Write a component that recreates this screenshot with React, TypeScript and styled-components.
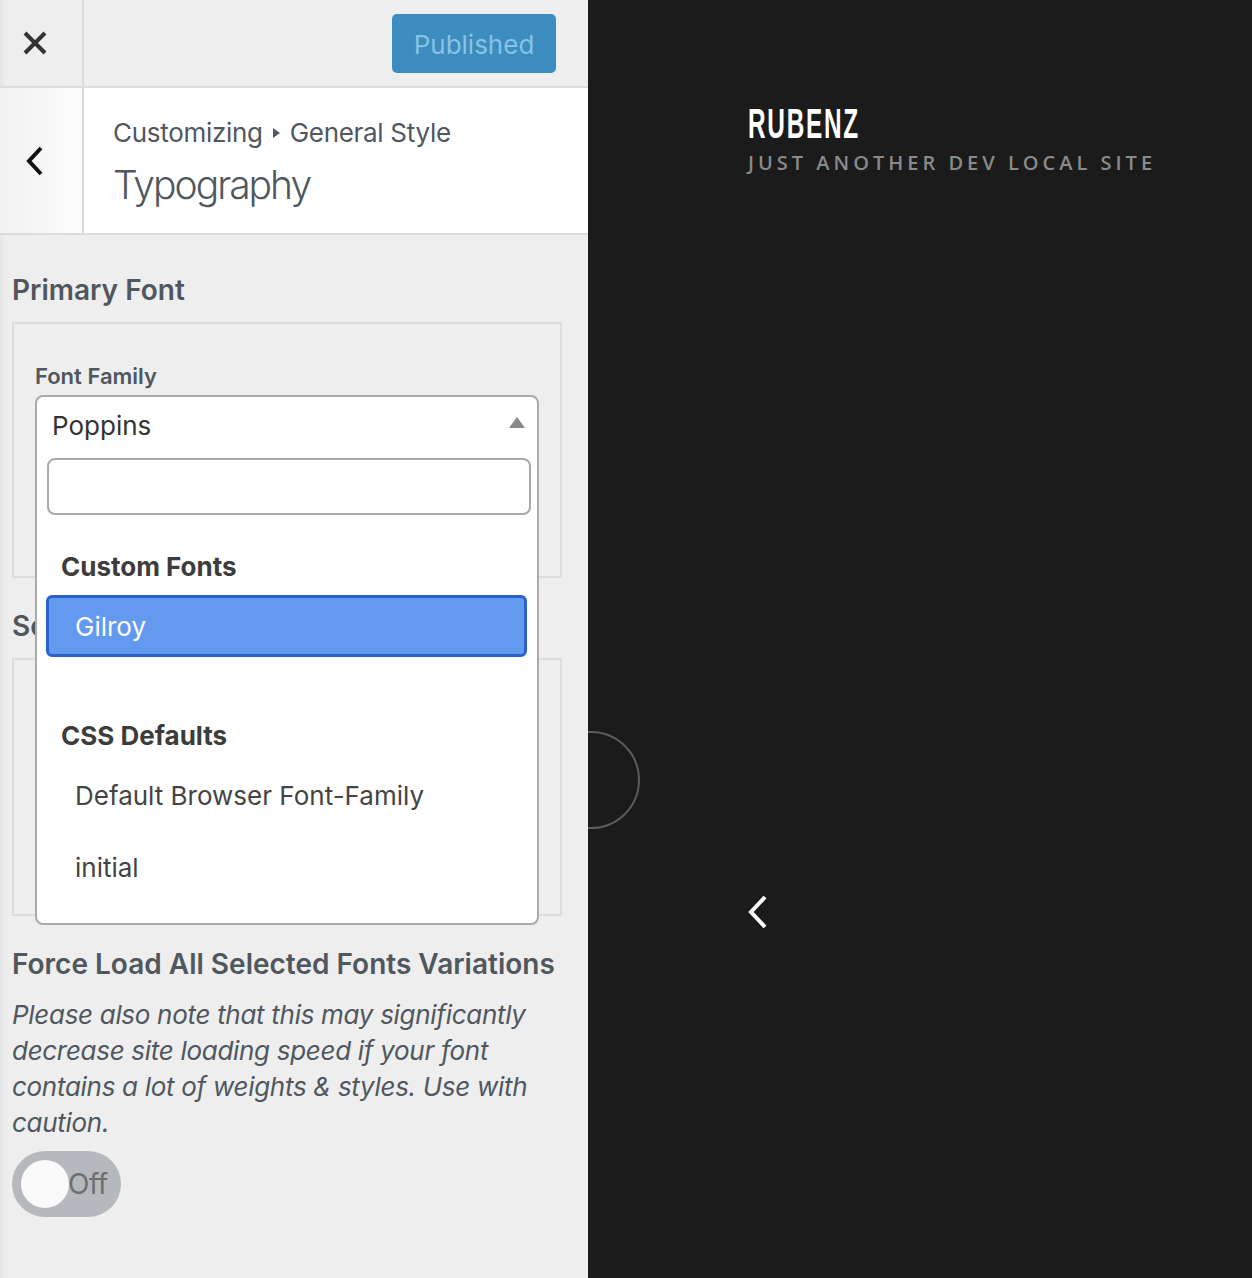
import React from "react";
import styled, { createGlobalStyle } from "styled-components";

const Global = createGlobalStyle`
  html, body { margin: 0; padding: 0; }
  body { overflow: hidden; font-family: Inter, "Noto Sans", sans-serif; }
  * { box-sizing: border-box; }
`;

const Page = styled.div`
  display: flex;
  width: 1252px;
  height: 1278px;
`;

const Sidebar = styled.aside`
  width: 588px;
  flex: none;
  background: #eeeeee;
  display: flex;
  flex-direction: column;
  position: relative;
  box-shadow: inset 10px 0 10px -10px rgba(0, 0, 0, 0.08);
`;

const TopBar = styled.div`
  display: flex;
  height: 88px;
  border-bottom: 2px solid #dcdcdc;
`;

const IconCell = styled.div<{ $light?: boolean }>`
  width: 84px;
  flex: none;
  border-right: 2px solid #dcdcdc;
  display: flex;
  align-items: center;
  justify-content: center;
  padding-right: 12px;
  background: ${(p) => (p.$light ? "linear-gradient(to right, #f1f1f1, #fdfdfd)" : "transparent")};
`;

const Actions = styled.div`
  flex: 1;
  display: flex;
  align-items: center;
  justify-content: flex-end;
  padding: 0 32px 0 0;
`;

const PublishButton = styled.button`
  width: 164px;
  height: 59px;
  border: none;
  border-radius: 5px;
  background: #3c8cc0;
  color: #86c3e6;
  font-family: Inter, sans-serif;
  font-size: 26px;
  font-weight: 400;
  padding: 3px 0 0;
  cursor: default;
`;

const TitleBar = styled.div`
  display: flex;
  height: 147px;
  border-bottom: 2px solid #dcdcdc;
`;

const TitleBox = styled.div`
  flex: 1;
  background: #ffffff;
  display: flex;
  flex-direction: column;
  padding: 28px 0 0 29px;
  color: #50575e;
`;

const Crumb = styled.div`
  font-size: 26px;
  line-height: 34px;
  letter-spacing: -0.3px;
  display: flex;
  align-items: center;
  gap: 10px;
`;

const CrumbArrow = styled.span`
  width: 0;
  height: 0;
  border-top: 5px solid transparent;
  border-bottom: 5px solid transparent;
  border-left: 7px solid #50575e;
`;

const PanelTitle = styled.div`
  font-size: 39px;
  font-weight: 300;
  line-height: 52px;
  margin-top: 9px;
  letter-spacing: -2px;
`;

const Content = styled.div`
  padding: 0 26px 0 12px;
  color: #50575e;
`;

const Section = styled.section`
  margin-top: 30px;
  &:first-child { margin-top: 37px; }
`;

const Heading = styled.h3`
  margin: 0 0 14px;
  font-size: 28px;
  line-height: 36px;
  font-weight: 600;
  color: #50575e;
`;

const Box = styled.div<{ $h: number }>`
  position: relative;
  height: ${(p) => p.$h}px;
  border: 2px solid #dddddd;
  padding: 37px 21px 0;
`;

const Label = styled.div`
  font-size: 22px;
  line-height: 30px;
  font-weight: 600;
  margin-bottom: 4px;
`;

const SelectWrap = styled.div`
  position: relative;
  z-index: 5;
`;

const SelectBox = styled.div`
  height: 55px;
  border: 2px solid #aaaaaa;
  border-radius: 8px 8px 0 0;
  background: #fff;
  display: flex;
  align-items: center;
  justify-content: space-between;
  padding: 5px 12px 0 15px;
  font-size: 26px;
  color: #333;
`;

const Caret = styled.span`
  width: 0;
  height: 0;
  margin-top: -5px;
  border-left: 8px solid transparent;
  border-right: 8px solid transparent;
  border-bottom: 11px solid #888;
`;

const Dropdown = styled.div`
  position: absolute;
  top: 100%;
  left: 0;
  right: 0;
  margin-top: -2px;
  height: 477px;
  background: #fff;
  border: 2px solid #aaaaaa;
  border-top: none;
  border-radius: 0 0 8px 8px;
  padding: 10px 10px 0 9px;
`;

const Search = styled.div`
  height: 57px;
  border: 2px solid #aaaaaa;
  border-radius: 8px;
  margin-left: 1px;
  margin-right: -4px;
`;

const GroupLabel = styled.div<{ $top: number }>`
  margin-top: ${(p) => p.$top}px;
  margin-bottom: 10px;
  padding-left: 15px;
  font-size: 26px;
  line-height: 36px;
  font-weight: 700;
  color: #3c3c3c;
`;

const Option = styled.div<{ $active?: boolean }>`
  height: 62px;
  margin-bottom: 10px;
  border: 3px solid ${(p) => (p.$active ? "#2a62c9" : "transparent")};
  border-radius: 6px;
  background: ${(p) => (p.$active ? "#6499f0" : "transparent")};
  color: ${(p) => (p.$active ? "#ffffff" : "#444444")};
  display: flex;
  align-items: center;
  padding: 0 0 0 26px;
  font-size: 26px;
`;

const Note = styled.p`
  margin: 15px 0 10px;
  font-size: 26px;
  line-height: 36px;
  font-style: italic;
  letter-spacing: -0.3px;
  color: #50575e;
`;

const Toggle = styled.div`
  position: relative;
  width: 109px;
  height: 66px;
  border-radius: 33px;
  background: #b5b8bc;
  display: flex;
  align-items: center;
  padding: 0 0 0 56px;
  font-size: 28px;
  letter-spacing: -0.5px;
  color: #6d6f72;
`;

const Knob = styled.span`
  position: absolute;
  left: 9px;
  top: 9px;
  width: 48px;
  height: 48px;
  border-radius: 50%;
  background: #fafafa;
`;

const Preview = styled.main`
  flex: 1;
  position: relative;
  overflow: hidden;
  background: #1b1b1b;
  padding: 104px 0 0 160px;
`;

const SiteTitle = styled.div`
  display: inline-block;
  font-family: "Liberation Sans", Arial, sans-serif;
  font-weight: 700;
  font-size: 42px;
  line-height: 40px;
  letter-spacing: 3px;
  color: #ffffff;
  transform: scaleX(0.58);
  transform-origin: left center;
`;

const Tagline = styled.div`
  margin-top: 6px;
  font-family: "Open Sans", sans-serif;
  font-weight: 600;
  font-size: 20px;
  line-height: 26px;
  letter-spacing: 4px;
  color: #8a8a8a;
`;

const Ring = styled.div`
  position: absolute;
  left: -46px;
  top: 731px;
  width: 98px;
  height: 98px;
  border: 2px solid #5c5c5c;
  border-radius: 50%;
`;

const PrevArrow = styled.svg`
  position: absolute;
  left: 158px;
  top: 895px;
`;

export default function App() {
  return (
    <Page>
      <Global />
      <Sidebar>
        <TopBar>
          <IconCell>
            <svg width="24" height="24" viewBox="0 0 24 24">
              <path d="M2 2 L22 22 M22 2 L2 22" stroke="#333" strokeWidth="4" fill="none" />
            </svg>
          </IconCell>
          <Actions>
            <PublishButton>Published</PublishButton>
          </Actions>
        </TopBar>
        <TitleBar>
          <IconCell $light>
            <svg width="20" height="30" viewBox="0 0 20 30">
              <path d="M16 2 L4 15 L16 28" stroke="#111" strokeWidth="4" fill="none" />
            </svg>
          </IconCell>
          <TitleBox>
            <Crumb>
              Customizing <CrumbArrow /> General Style
            </Crumb>
            <PanelTitle>Typography</PanelTitle>
          </TitleBox>
        </TitleBar>
        <Content>
          <Section>
            <Heading>Primary Font</Heading>
            <Box $h={256}>
              <Label>Font Family</Label>
              <SelectWrap>
                <SelectBox>
                  Poppins
                  <Caret />
                </SelectBox>
                <Dropdown>
                  <Search />
                  <GroupLabel $top={34}>Custom Fonts</GroupLabel>
                  <Option $active>Gilroy</Option>
                  <GroupLabel $top={61}>CSS Defaults</GroupLabel>
                  <Option>Default Browser Font-Family</Option>
                  <Option>initial</Option>
                </Dropdown>
              </SelectWrap>
            </Box>
          </Section>
          <Section>
            <Heading>Secondary Font</Heading>
            <Box $h={258} />
          </Section>
          <Section>
            <Heading>Force Load All Selected Fonts Variations</Heading>
            <Note>
              Please also note that this may significantly decrease site loading speed if your font
              contains a lot of weights &amp; styles. Use with caution.
            </Note>
            <Toggle>
              Off
              <Knob />
            </Toggle>
          </Section>
        </Content>
      </Sidebar>
      <Preview>
        <SiteTitle>RUBENZ</SiteTitle>
        <Tagline>JUST ANOTHER DEV LOCAL SITE</Tagline>
        <Ring />
        <PrevArrow width="24" height="34" viewBox="0 0 24 34">
          <path d="M19 2 L5 17 L19 32" stroke="#fff" strokeWidth="4" fill="none" />
        </PrevArrow>
      </Preview>
    </Page>
  );
}
